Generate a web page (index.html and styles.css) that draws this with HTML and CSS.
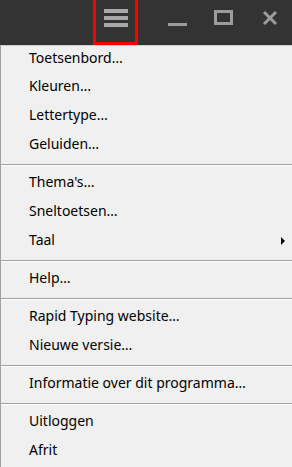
FILE: index.html
```html
<!DOCTYPE html>
<html lang="nl">
<head>
    <meta name="viewport" content="width=device-width,initial-scale=1.0">
    <title>Rapid Typing - menu</title>
    <link rel="stylesheet" href="styles.css">
</head>
<body>

    <div class="title-bar">
        <button class="menu-button" title="Menu">
            <svg width="24" height="18" viewBox="0 0 24 18">
                <rect x="0" y="0" width="24" height="4" fill="#a8a8a8"/>
                <rect x="0" y="7" width="24" height="4" fill="#a8a8a8"/>
                <rect x="0" y="14" width="24" height="4" fill="#a8a8a8"/>
            </svg>
        </button>
        <div class="window-buttons">
            <button class="win-btn" title="Minimaliseren">
                <svg width="20" height="20" viewBox="0 0 20 20">
                    <rect x="0" y="13" width="19" height="3" fill="#9c9c9c"/>
                </svg>
            </button>
            <button class="win-btn" title="Maximaliseren">
                <svg width="20" height="20" viewBox="0 0 20 20">
                    <rect x="1.5" y="1.5" width="16" height="12" fill="none" stroke="#9c9c9c" stroke-width="3"/>
                </svg>
            </button>
            <button class="win-btn" title="Sluiten">
                <svg width="20" height="20" viewBox="0 0 20 20">
                    <path d="M4 2 L16 14 M16 2 L4 14" stroke="#9c9c9c" stroke-width="3"/>
                </svg>
            </button>
        </div>
    </div>

    <ul class="menu">
        <li class="item">Toetsenbord…</li>
        <li class="item">Kleuren…</li>
        <li class="item">Lettertype…</li>
        <li class="item">Geluiden…</li>
        <li class="sep"></li>
        <li class="item">Thema's…</li>
        <li class="item">Sneltoetsen…</li>
        <li class="item sub">Taal</li>
        <li class="sep"></li>
        <li class="item">Help…</li>
        <li class="sep"></li>
        <li class="item">Rapid Typing website…</li>
        <li class="item">Nieuwe versie…</li>
        <li class="sep"></li>
        <li class="item">Informatie over dit programma…</li>
        <li class="sep"></li>
        <li class="item">Uitloggen</li>
        <li class="item">Afrit</li>
    </ul>

</body>
</html>
```

FILE: styles.css
```css
body {
    margin: 0;
    background: #f0f0f0;
    font-family: "Noto Sans", "Open Sans", sans-serif;
    color: #000;
    overflow: hidden;
}

.title-bar {
    display: flex;
    align-items: stretch;
    height: 45px;
    background: #333333;
}

.menu-button {
    flex-shrink: 0;
    width: 45px;
    margin-left: 93px;
    padding: 9px 0 0 0;
    display: flex;
    justify-content: center;
    align-items: flex-start;
    background: transparent;
    border: 3px solid #ff0000;
    border-top: none;
    box-sizing: border-box;
    cursor: pointer;
}

.menu-button svg {
    display: block;
}

.window-buttons {
    display: flex;
    margin-left: 17px;
}

.win-btn {
    flex-shrink: 0;
    width: 46px;
    padding: 10px 0 0 0;
    display: flex;
    justify-content: center;
    align-items: flex-start;
    background: transparent;
    border: none;
    cursor: pointer;
}

.menu {
    list-style: none;
    margin: 0;
    padding: 0;
    border-top: 1px solid #cfcfcf;
    border-left: 1px solid #a0a0a0;
    background: #f0f0f0;
}

.item {
    position: relative;
    height: 29px;
    padding-left: 28px;
    font-size: 14px;
    line-height: 24px;
    white-space: nowrap;
}

.menu .item:first-child {
    height: 28px;
}

.item.sub::after {
    content: "";
    position: absolute;
    right: 7px;
    top: 9px;
    border-top: 4px solid transparent;
    border-bottom: 4px solid transparent;
    border-left: 4px solid #000;
}

.sep {
    height: 9px;
    box-sizing: border-box;
    padding-top: 3px;
}

.sep::before {
    content: "";
    display: block;
    height: 1px;
    background: #a0a0a0;
    border-bottom: 1px solid #ffffff;
}
```
